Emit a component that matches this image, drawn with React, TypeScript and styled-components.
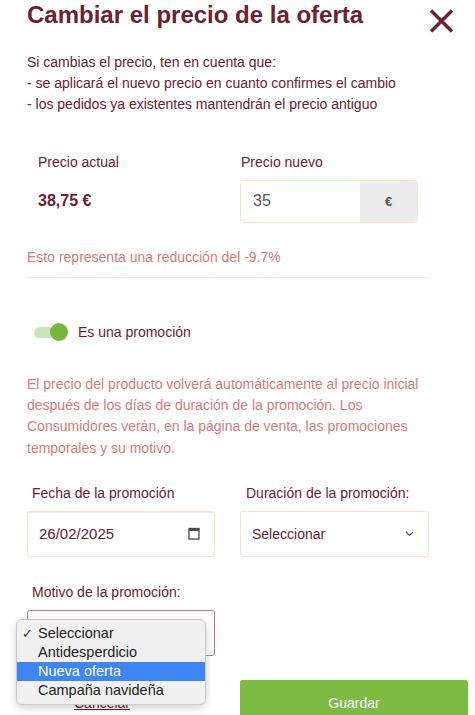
import React from "react";
import styled, { createGlobalStyle } from "styled-components";

const maroon = "#6b2132";
const salmon = "#d67c7b";
const peach = "#fde2c4";

const Global = createGlobalStyle`
  html, body { margin: 0; padding: 0; overflow: hidden; background: #fff; }
  body { font-family: "Liberation Sans", Arial, Helvetica, sans-serif; color: ${maroon}; }
  * { box-sizing: border-box; }
`;

const Page = styled.div`
  width: 475px;
  padding: 0 21px 0 27px;
`;

const Header = styled.header`
  display: flex;
  justify-content: space-between;
  align-items: flex-start;
`;

const Title = styled.h1`
  margin: 0;
  font-size: 24px;
  line-height: 29px;
  font-weight: 700;
  color: ${maroon};
`;

const CloseButton = styled.button`
  border: 0;
  background: none;
  padding: 0;
  margin-top: 9px;
  width: 25px;
  height: 24px;
  display: flex;
  cursor: pointer;
`;

const Intro = styled.p`
  margin: 18.5px 0 0;
  font-size: 14px;
  line-height: 21px;
  color: ${maroon};
`;

const PriceGrid = styled.div`
  display: grid;
  grid-template-columns: 213px 178px;
  row-gap: 7px;
  margin-top: 37px;
`;

const Label = styled.div<{ $pad: number }>`
  font-size: 14px;
  line-height: 21px;
  padding-left: ${(p) => p.$pad}px;
  color: ${maroon};
`;

const CurrentPrice = styled.div`
  align-self: center;
  padding-left: 11px;
  font-size: 16px;
  font-weight: 700;
  color: ${maroon};
`;

const InputGroup = styled.div`
  display: flex;
  height: 43px;
  border: 1px solid ${peach};
  border-radius: 4px;
  overflow: hidden;
`;

const PriceInput = styled.input`
  flex: 1;
  min-width: 0;
  border: 0;
  outline: none;
  padding: 0 0 0 12px;
  font-family: inherit;
  font-size: 16px;
  color: #555;
  background: #fff;
`;

const Addon = styled.span`
  width: 57px;
  display: flex;
  align-items: center;
  justify-content: center;
  background: #ececec;
  font-size: 13px;
  font-weight: 700;
  color: #555;
`;

const Note = styled.p<{ $top: number; $lh: number }>`
  margin: ${(p) => p.$top}px 0 0;
  width: 403px;
  font-size: 14px;
  line-height: ${(p) => p.$lh}px;
  color: ${salmon};
`;

const Divider = styled.hr`
  margin: 9.5px 0 0;
  width: 403px;
  border: 0;
  height: 1px;
  background: #fbe2d2;
`;

const ToggleRow = styled.label`
  display: flex;
  align-items: center;
  gap: 10px;
  height: 20px;
  margin-top: 44px;
  padding-left: 7px;
  font-size: 14px;
  color: ${maroon};
`;

const Toggle = styled.span`
  position: relative;
  width: 34px;
  height: 18px;
  display: flex;
  align-items: center;
`;

const Track = styled.span`
  width: 32px;
  height: 11px;
  border-radius: 6px;
  background: #cde5b4;
`;

const Knob = styled.span`
  position: absolute;
  right: 0;
  top: 0;
  width: 18px;
  height: 18px;
  border-radius: 50%;
  background: #79b43c;
`;

const FieldsGrid = styled.div<{ $top: number }>`
  display: grid;
  grid-template-columns: 188px 189px;
  column-gap: 25px;
  row-gap: 7px;
  margin-top: ${(p) => p.$top}px;
`;

const Field = styled.div`
  display: flex;
  flex-direction: column;
  gap: 7px;
  position: relative;
`;

const Box = styled.div<{ $border?: string; $inset?: boolean }>`
  height: 46px;
  display: flex;
  align-items: center;
  justify-content: space-between;
  padding: 0 14px 0 11px;
  border: 1px solid ${(p) => p.$border || peach};
  border-radius: 3px;
  background: #fff;
  box-shadow: ${(p) => (p.$inset ? "inset 0 1px 1px rgba(0,0,0,0.09)" : "none")};
  color: ${maroon};
`;

const DateText = styled.span`
  font-size: 15px;
  color: ${maroon};
`;

const SelectText = styled.span`
  font-size: 14px;
  color: ${maroon};
`;

const Menu = styled.ul`
  position: absolute;
  z-index: 2;
  left: -11px;
  top: 37px;
  width: 190px;
  margin: 0;
  padding: 4px 0;
  list-style: none;
  background: #f0f0f0;
  border: 1px solid #c9c9c9;
  border-radius: 6px;
  box-shadow: 0 3px 8px rgba(0, 0, 0, 0.18);
`;

const MenuItem = styled.li<{ $active?: boolean }>`
  display: flex;
  align-items: center;
  height: 19px;
  padding-left: 5px;
  font-size: 14.5px;
  color: ${(p) => (p.$active ? "#fff" : "#222")};
  background: ${(p) => (p.$active ? "#3e86f5" : "transparent")};
`;

const Check = styled.span`
  width: 16px;
  font-size: 13px;
  font-family: "DejaVu Sans", sans-serif;
  color: #333;
`;

const Footer = styled.div`
  display: grid;
  grid-template-columns: 213px 228px;
  margin-top: 24px;
`;

const CancelLink = styled.a`
  align-self: center;
  padding-left: 47px;
  font-size: 14px;
  color: ${maroon};
  text-decoration: underline;
`;

const SaveButton = styled.button`
  height: 46px;
  border: 0;
  border-radius: 3px;
  background: #7dba42;
  color: #fff;
  font-family: inherit;
  font-size: 14px;
`;

const CloseIcon = () => (
  <svg width="25" height="24" viewBox="0 0 25 24">
    <path d="M2 1.5 L23 22.5 M23 1.5 L2 22.5" stroke={maroon} strokeWidth="3.4" />
  </svg>
);

const CalendarIcon = () => (
  <svg width="12" height="13" viewBox="0 0 12 13">
    <rect x="1" y="1.5" width="10" height="10.5" fill="none" stroke="#4a4a4a" strokeWidth="1.3" />
    <rect x="1" y="1.5" width="10" height="2.5" fill="#4a4a4a" />
  </svg>
);

const Chevron = () => (
  <svg width="9" height="6" viewBox="0 0 9 6">
    <path d="M1 1 L4.5 4.5 L8 1" fill="none" stroke="#555" strokeWidth="1.2" />
  </svg>
);

const options = ["Seleccionar", "Antidesperdicio", "Nueva oferta", "Campaña navideña"];

export default function App() {
  return (
    <>
      <Global />
      <Page>
        <Header>
          <Title>Cambiar el precio de la oferta</Title>
          <CloseButton aria-label="Cerrar">
            <CloseIcon />
          </CloseButton>
        </Header>

        <Intro>
          Si cambias el precio, ten en cuenta que:
          <br />- se aplicará el nuevo precio en cuanto confirmes el cambio
          <br />- los pedidos ya existentes mantendrán el precio antiguo
        </Intro>

        <PriceGrid>
          <Label $pad={11}>Precio actual</Label>
          <Label $pad={1}>Precio nuevo</Label>
          <CurrentPrice>38,75 €</CurrentPrice>
          <InputGroup>
            <PriceInput defaultValue="35" />
            <Addon>€</Addon>
          </InputGroup>
        </PriceGrid>

        <Note $top={24} $lh={21}>Esto representa una reducción del -9.7%</Note>
        <Divider />

        <ToggleRow>
          <Toggle>
            <Track />
            <Knob />
          </Toggle>
          Es una promoción
        </ToggleRow>

        <Note $top={32} $lh={21.2}>
          El precio del producto volverá automáticamente al precio inicial después de los días de
          duración de la promoción. Los Consumidores verán, en la página de venta, las promociones
          temporales y su motivo.
        </Note>

        <FieldsGrid $top={24}>
          <Field>
            <Label $pad={5}>Fecha de la promoción</Label>
            <Box $inset>
              <DateText>26/02/2025</DateText>
              <CalendarIcon />
            </Box>
          </Field>
          <Field>
            <Label $pad={6}>Duración de la promoción:</Label>
            <Box>
              <SelectText>Seleccionar</SelectText>
              <Chevron />
            </Box>
          </Field>
        </FieldsGrid>

        <FieldsGrid $top={25}>
          <Field>
            <Label $pad={5}>Motivo de la promoción:</Label>
            <Box $border="#c97878" />
            <Menu>
              {options.map((o, i) => (
                <MenuItem key={o} $active={i === 2}>
                  <Check>{i === 0 ? "✓" : ""}</Check>
                  {o}
                </MenuItem>
              ))}
            </Menu>
          </Field>
        </FieldsGrid>

        <Footer>
          <CancelLink href="#">Cancelar</CancelLink>
          <SaveButton>Guardar</SaveButton>
        </Footer>
      </Page>
    </>
  );
}
